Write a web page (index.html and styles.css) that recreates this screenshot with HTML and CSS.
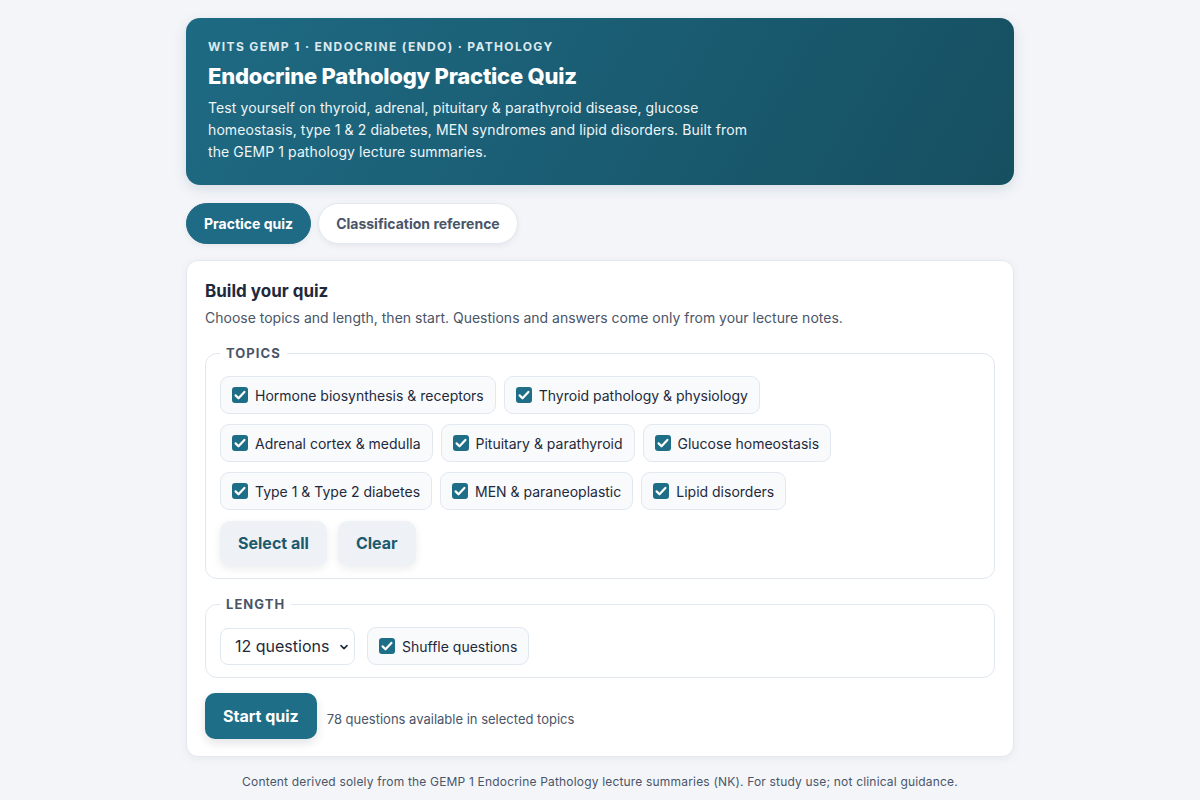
FILE: index.html
```html
<!DOCTYPE html>
<html lang="en">
<head>
<meta charset="utf-8">
<title>Endocrine Pathology Practice Quiz</title>
<link rel="stylesheet" href="styles.css">
</head>
<body>
<main class="wrap">
  <header class="hero">
    <div class="eyebrow">Wits GEMP 1 · Endocrine (ENDO) · Pathology</div>
    <h1 class="hero-title">Endocrine Pathology Practice Quiz</h1>
    <p class="hero-desc">Test yourself on thyroid, adrenal, pituitary &amp; parathyroid disease, glucose homeostasis, type 1 &amp; 2 diabetes, MEN syndromes and lipid disorders. Built from the GEMP 1 pathology lecture summaries.</p>
  </header>

  <nav class="tabs">
    <button class="tab tab-active">Practice quiz</button>
    <button class="tab">Classification reference</button>
  </nav>

  <section class="card">
    <h2 class="card-title">Build your quiz</h2>
    <p class="card-sub">Choose topics and length, then start. Questions and answers come only from your lecture notes.</p>

    <fieldset class="group">
      <legend class="group-label">Topics</legend>
      <div class="chips">
        <label class="chip"><span class="box"><svg viewBox="0 0 16 16" width="16" height="16"><path d="M3.6 8.4l2.9 2.9 5.9-6.4" fill="none" stroke="#fff" stroke-width="2.2" stroke-linecap="round" stroke-linejoin="round"/></svg></span>Hormone biosynthesis &amp; receptors</label>
        <label class="chip"><span class="box"><svg viewBox="0 0 16 16" width="16" height="16"><path d="M3.6 8.4l2.9 2.9 5.9-6.4" fill="none" stroke="#fff" stroke-width="2.2" stroke-linecap="round" stroke-linejoin="round"/></svg></span>Thyroid pathology &amp; physiology</label>
        <label class="chip"><span class="box"><svg viewBox="0 0 16 16" width="16" height="16"><path d="M3.6 8.4l2.9 2.9 5.9-6.4" fill="none" stroke="#fff" stroke-width="2.2" stroke-linecap="round" stroke-linejoin="round"/></svg></span>Adrenal cortex &amp; medulla</label>
        <label class="chip"><span class="box"><svg viewBox="0 0 16 16" width="16" height="16"><path d="M3.6 8.4l2.9 2.9 5.9-6.4" fill="none" stroke="#fff" stroke-width="2.2" stroke-linecap="round" stroke-linejoin="round"/></svg></span>Pituitary &amp; parathyroid</label>
        <label class="chip"><span class="box"><svg viewBox="0 0 16 16" width="16" height="16"><path d="M3.6 8.4l2.9 2.9 5.9-6.4" fill="none" stroke="#fff" stroke-width="2.2" stroke-linecap="round" stroke-linejoin="round"/></svg></span>Glucose homeostasis</label>
        <label class="chip"><span class="box"><svg viewBox="0 0 16 16" width="16" height="16"><path d="M3.6 8.4l2.9 2.9 5.9-6.4" fill="none" stroke="#fff" stroke-width="2.2" stroke-linecap="round" stroke-linejoin="round"/></svg></span>Type 1 &amp; Type 2 diabetes</label>
        <label class="chip"><span class="box"><svg viewBox="0 0 16 16" width="16" height="16"><path d="M3.6 8.4l2.9 2.9 5.9-6.4" fill="none" stroke="#fff" stroke-width="2.2" stroke-linecap="round" stroke-linejoin="round"/></svg></span>MEN &amp; paraneoplastic</label>
        <label class="chip"><span class="box"><svg viewBox="0 0 16 16" width="16" height="16"><path d="M3.6 8.4l2.9 2.9 5.9-6.4" fill="none" stroke="#fff" stroke-width="2.2" stroke-linecap="round" stroke-linejoin="round"/></svg></span>Lipid disorders</label>
      </div>
      <div class="actions">
        <button class="btn-soft">Select all</button>
        <button class="btn-soft">Clear</button>
      </div>
    </fieldset>

    <fieldset class="group">
      <legend class="group-label">Length</legend>
      <div class="length-row">
        <div class="select-wrap">
          <select class="select">
            <option>12 questions</option>
          </select>
          <svg class="chev" viewBox="0 0 10 10" width="10" height="10"><path d="M2 3.6l3 3 3-3" fill="none" stroke="#1e293b" stroke-width="1.6" stroke-linecap="round" stroke-linejoin="round"/></svg>
        </div>
        <label class="chip"><span class="box"><svg viewBox="0 0 16 16" width="16" height="16"><path d="M3.6 8.4l2.9 2.9 5.9-6.4" fill="none" stroke="#fff" stroke-width="2.2" stroke-linecap="round" stroke-linejoin="round"/></svg></span>Shuffle questions</label>
      </div>
    </fieldset>

    <div class="start-row">
      <button class="btn-primary">Start quiz</button>
      <span class="hint">78 questions available in selected topics</span>
    </div>
  </section>

  <footer class="foot">Content derived solely from the GEMP 1 Endocrine Pathology lecture summaries (NK). For study use; not clinical guidance.</footer>
</main>
</body>
</html>
```

FILE: styles.css
```css
* { box-sizing: border-box; }

body {
  margin: 0;
  background: #f3f5f9;
  font-family: Inter, "Noto Sans", "Liberation Sans", sans-serif;
  color: #1e293b;
}

.wrap {
  width: 828px;
  margin: 0 auto;
  padding-top: 18px;
}

.hero {
  background: linear-gradient(120deg, #1e6a83 0%, #1a5d73 50%, #164f60 100%);
  color: #fff;
  border-radius: 14px;
  padding: 21px 22px 22px;
  box-shadow: 0 4px 14px rgba(20, 60, 80, 0.12);
}

.eyebrow {
  font-size: 12px;
  line-height: 16px;
  font-weight: 700;
  letter-spacing: 0.113em;
  text-transform: uppercase;
  color: #dce9ef;
}

.hero-title {
  margin: 7px 0 0;
  font-size: 22px;
  line-height: 28px;
  font-weight: 800;
  letter-spacing: -0.01em;
}

.hero-desc {
  margin: 7px 0 0;
  max-width: 552px;
  font-size: 14px;
  line-height: 22px;
  letter-spacing: 0.1px;
  color: #eef5f8;
}

.tabs {
  display: flex;
  gap: 7px;
  margin-top: 18px;
}

.tab {
  font-family: inherit;
  font-size: 14px;
  line-height: 19px;
  font-weight: 700;
  padding: 10px 17px;
  border-radius: 999px;
  border: 1px solid #e2e8f0;
  background: #fff;
  color: #4a5568;
  box-shadow: 0 2px 6px rgba(15, 23, 42, 0.06);
}

.tab-active {
  background: #1f6b85;
  border-color: #1f6b85;
  color: #fff;
}

.card {
  margin-top: 16px;
  background: #fff;
  border: 1px solid #e2e8f0;
  border-radius: 12px;
  padding: 18px 18px 17px;
  box-shadow: 0 2px 10px rgba(15, 23, 42, 0.05);
}

.card-title {
  margin: 0;
  font-size: 17px;
  line-height: 24px;
  font-weight: 700;
  color: #1e293b;
}

.card-sub {
  margin: 5px 0 0;
  font-size: 14px;
  line-height: 20px;
  color: #4a5568;
}

.group {
  margin: 17px 0 0;
  border: 1px solid #e2e8f0;
  border-radius: 12px;
  padding: 15px 14px 12px;
}

.group-label {
  padding: 0 6px;
  margin-left: 0;
  font-size: 13px;
  line-height: 16px;
  font-weight: 700;
  letter-spacing: 0.08em;
  text-transform: uppercase;
  color: #4a5568;
}

.chips {
  display: flex;
  flex-wrap: wrap;
  gap: 10px 8px;
}

.chip {
  display: inline-flex;
  align-items: center;
  gap: 7px;
  height: 38px;
  padding: 0 11px 0 11px;
  background: #f8fafc;
  border: 1px solid #e2e8f0;
  border-radius: 9px;
  font-size: 14px;
  color: #1e293b;
}

.box {
  width: 16px;
  height: 16px;
  border-radius: 3px;
  background: #1f6e87;
  display: inline-flex;
}

.box svg { display: block; }

.actions {
  display: flex;
  gap: 11px;
  margin-top: 11px;
}

.btn-soft {
  font-family: inherit;
  font-size: 16px;
  line-height: 21px;
  font-weight: 700;
  padding: 12px 18px;
  border: none;
  border-radius: 10px;
  background: #eef2f6;
  color: #1d5a6e;
  box-shadow: 0 3px 8px rgba(15, 23, 42, 0.08);
}

.length-row {
  display: flex;
  align-items: center;
  gap: 12px;
}

.select-wrap {
  position: relative;
  display: inline-flex;
}

.select {
  appearance: none;
  -webkit-appearance: none;
  width: 135px;
  height: 37px;
  padding: 0 18px 0 14px;
  font-family: inherit;
  font-size: 16px;
  color: #1e293b;
  background: #fff;
  border: 1px solid #e2e8f0;
  border-radius: 8px;
}

.chev {
  position: absolute;
  right: 6px;
  top: 14px;
  pointer-events: none;
}

.start-row {
  display: flex;
  align-items: center;
  gap: 10px;
  margin-top: 15px;
}

.btn-primary {
  font-family: inherit;
  font-size: 16px;
  line-height: 22px;
  font-weight: 700;
  padding: 12px 18px;
  border: none;
  border-radius: 10px;
  background: #1f6e87;
  color: #fff;
  box-shadow: 0 4px 10px rgba(15, 23, 42, 0.12);
}

.hint {
  font-size: 13px;
  color: #4a5568;
  margin-top: 5px;
}

.foot {
  margin-top: 16px;
  text-align: center;
  font-size: 12px;
  line-height: 18px;
  letter-spacing: 0.18px;
  color: #4a5568;
}
```
